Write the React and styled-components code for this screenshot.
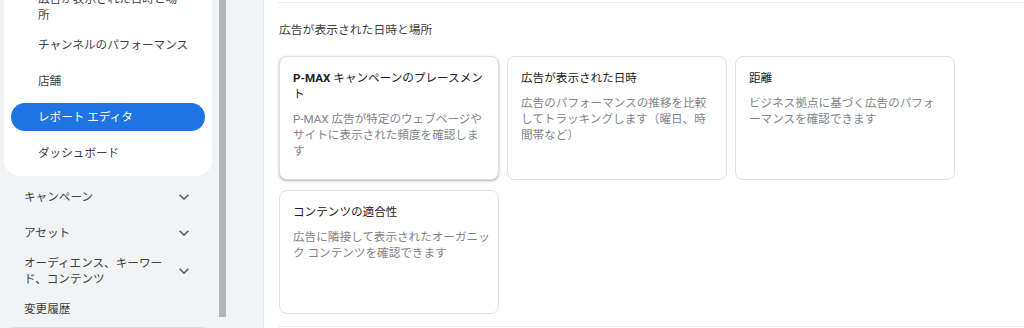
import React from 'react';
import styled, { createGlobalStyle } from 'styled-components';

const GlobalStyle = createGlobalStyle`
  html, body {
    margin: 0;
    padding: 0;
    overflow: hidden;
    background: #ffffff;
  }
  body {
    font-family: Roboto, "Noto Sans CJK JP", "Noto Sans", sans-serif;
    -webkit-font-smoothing: antialiased;
  }
`;

const Page = styled.div`
  display: flex;
  width: 1024px;
  height: 328px;
  overflow: hidden;
  background: #ffffff;
`;

const Sidebar = styled.aside`
  flex: none;
  width: 264px;
  height: 100%;
  box-sizing: border-box;
  display: flex;
  background: #f1f3f4;
  border-right: 1px solid #e2e4e7;
`;

const NavScroll = styled.div`
  width: 216px;
  box-sizing: border-box;
  padding: 0 4px;
  overflow: hidden;
`;

// the list is scrolled: the first item is partly above the top edge
const NavContent = styled.div`
  margin-top: -13px;
`;

const Panel = styled.div`
  background: #ffffff;
  border-radius: 0 0 16px 16px;
  padding: 0 7px 5px;
`;

const PanelItem = styled.div`
  display: flex;
  min-height: 36px;
  padding: 4px 0;
  box-sizing: border-box;
`;

const Pill = styled.div`
  flex: 1;
  display: flex;
  align-items: center;
  min-height: 28px;
  padding: 0 16px 0 27px;
  border-radius: 14px;
  font-size: 11.6px;
  line-height: 16px;
  white-space: pre-line;
  color: ${p => (p.$active ? '#ffffff' : '#3c4043')};
  background: ${p => (p.$active ? '#1f74e4' : 'transparent')};
`;

const NavList = styled.div`
  padding-top: 3px;
`;

const NavItem = styled.div`
  display: flex;
  align-items: center;
  min-height: 36px;
  padding: 4px 16px 4px 20px;
  box-sizing: border-box;
`;

const NavLabel = styled.span`
  flex: 1;
  font-size: 11.6px;
  line-height: 16px;
  color: #3c4043;
  white-space: pre-line;
`;

const Chevron = styled.span`
  flex: none;
  width: 24px;
  height: 20px;
  display: flex;
  align-items: center;
  justify-content: center;
  color: #5f6368;
`;

const NextGroup = styled.div`
  margin: 0 1px;
  background: #ffffff;
  border: 1px solid #dadce0;
  border-radius: 12px;
  padding: 0 19px;
  font-size: 11.6px;
  line-height: 16px;
  color: #3c4043;
`;

const ScrollTrack = styled.div`
  flex: none;
  width: 13px;
  padding-left: 3px;
  box-sizing: border-box;
`;

const Thumb = styled.div`
  width: 7px;
  height: 317px;
  background: #b3b4b6;
`;

const Main = styled.main`
  flex: 1;
  padding-left: 14px;
  overflow: hidden;
`;

const PrevSection = styled.div`
  height: 2px;
  border-bottom: 1px solid #e8eaed;
`;

const Section = styled.section`
  padding: 19px 0 12px 1px;
  border-bottom: 1px solid #e8eaed;
`;

const SectionTitle = styled.h2`
  margin: 0 0 18px;
  font-size: 11.8px;
  line-height: 16px;
  font-weight: 400;
  color: #3c4043;
`;

const CardGrid = styled.div`
  display: grid;
  grid-template-columns: repeat(3, 220px);
  grid-auto-rows: 124px;
  column-gap: 8px;
  row-gap: 10px;
`;

const Card = styled.div`
  box-sizing: border-box;
  padding: 13px 6px 11px 13px;
  background: #ffffff;
  border: 1px solid #dfe1e5;
  border-radius: 8px;
  box-shadow: ${p => (p.$hover ? '0 1px 3px rgba(60, 64, 67, 0.32), 0 1px 1px rgba(60, 64, 67, 0.12)' : 'none')};
`;

const CardTitle = styled.div`
  margin-bottom: 9px;
  font-size: 11.6px;
  line-height: 16px;
  font-weight: 400;
  color: #202124;
  white-space: pre-line;

  b {
    font-weight: 700;
  }
`;

const CardText = styled.div`
  font-size: 11.6px;
  line-height: 16px;
  color: #80868b;
  white-space: pre-line;
`;

const ExpandIcon = () => (
  <svg width="20" height="20" viewBox="0 0 24 24" fill="currentColor">
    <path d="M16.59 8.59L12 13.17 7.41 8.59 6 10l6 6 6-6z" />
  </svg>
);

const panelItems = [
  { label: '広告が表示された日時と場\n所' },
  { label: 'チャンネルのパフォーマンス' },
  { label: '店舗' },
  { label: 'レポート エディタ', active: true },
  { label: 'ダッシュボード' },
];

const navItems = [
  { label: 'キャンペーン', expandable: true },
  { label: 'アセット', expandable: true },
  { label: 'オーディエンス、キーワー\nド、コンテンツ', expandable: true },
  { label: '変更履歴' },
];

const cards = [
  {
    title: (
      <>
        <b>P-MAX</b> キャンペーンのプレースメン{'\n'}ト
      </>
    ),
    text: 'P-MAX 広告が特定のウェブページや\nサイトに表示された頻度を確認しま\nす',
    hover: true,
  },
  {
    title: '広告が表示された日時',
    text: '広告のパフォーマンスの推移を比較\nしてトラッキングします（曜日、時\n間帯など）',
  },
  {
    title: '距離',
    text: 'ビジネス拠点に基づく広告のパフォ\nーマンスを確認できます',
  },
  {
    title: 'コンテンツの適合性',
    text: '広告に隣接して表示されたオーガニッ\nク コンテンツを確認できます',
  },
];

export default function App() {
  return (
    <>
      <GlobalStyle />
      <Page>
        <Sidebar>
          <NavScroll>
            <NavContent>
              <Panel>
                {panelItems.map(item => (
                  <PanelItem key={item.label}>
                    <Pill $active={item.active}>{item.label}</Pill>
                  </PanelItem>
                ))}
              </Panel>
              <NavList>
                {navItems.map(item => (
                  <NavItem key={item.label}>
                    <NavLabel>{item.label}</NavLabel>
                    {item.expandable && (
                      <Chevron>
                        <ExpandIcon />
                      </Chevron>
                    )}
                  </NavItem>
                ))}
              </NavList>
              <NextGroup>レポート</NextGroup>
            </NavContent>
          </NavScroll>
          <ScrollTrack>
            <Thumb />
          </ScrollTrack>
        </Sidebar>
        <Main>
          <PrevSection />
          <Section>
            <SectionTitle>広告が表示された日時と場所</SectionTitle>
            <CardGrid>
              {cards.map((card, i) => (
                <Card key={i} $hover={card.hover}>
                  <CardTitle>{card.title}</CardTitle>
                  <CardText>{card.text}</CardText>
                </Card>
              ))}
            </CardGrid>
          </Section>
        </Main>
      </Page>
    </>
  );
}
